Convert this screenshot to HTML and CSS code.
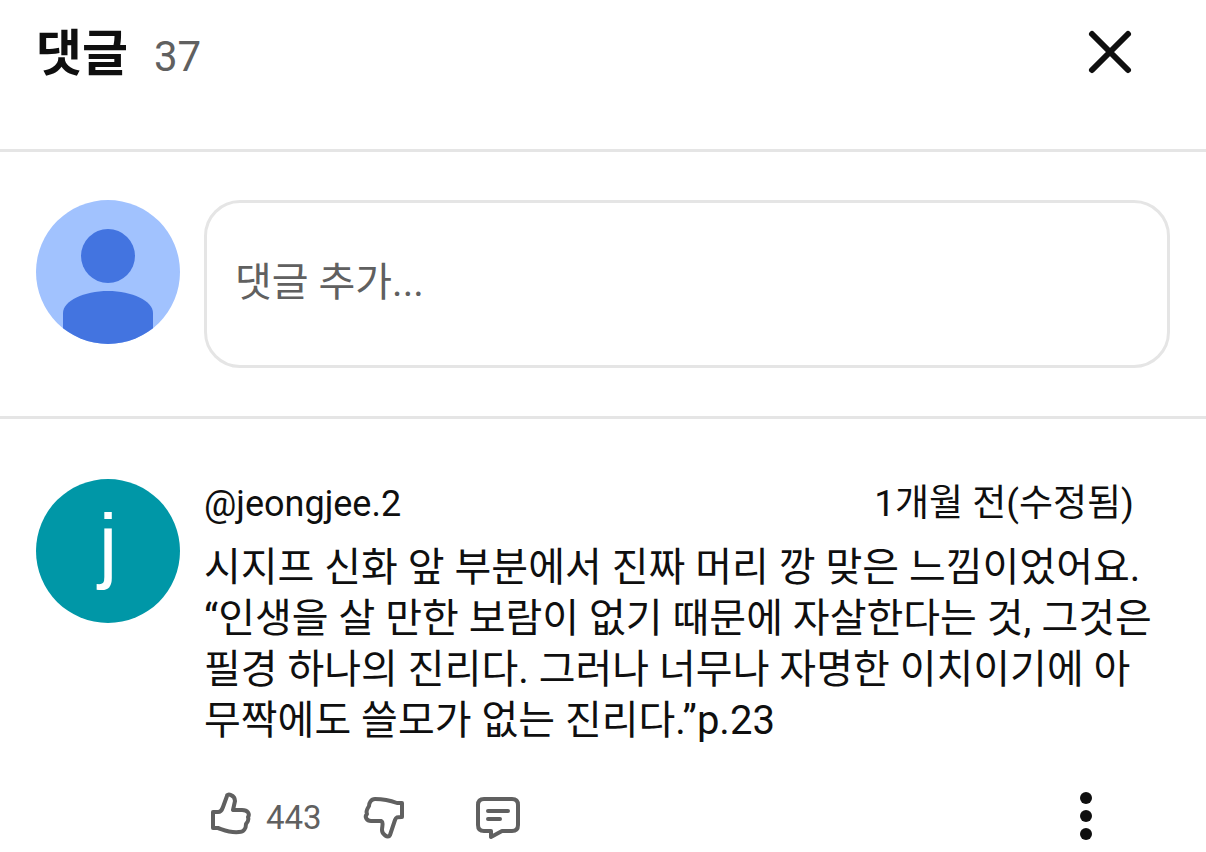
FILE: index.html
```
<!DOCTYPE html>
<html lang="ko">
<head>
    <meta charset="UTF-8">
    <meta name="viewport" content="width=device-width, initial-scale=1.0">
    <title>댓글</title>
    <link rel="stylesheet" href="styles.css">
</head>
<body>
    <header class="header">
        <h1>댓글</h1>
        <span class="count">37</span>
        <button class="close" type="button" aria-label="닫기">
            <svg width="48" height="48" viewBox="0 0 48 48"><path d="M6 6L42 42M42 6L6 42"/></svg>
        </button>
    </header>

    <form class="add-comment">
        <svg class="avatar" viewBox="0 0 144 144" aria-hidden="true">
            <rect width="144" height="144" fill="#a1c2fe"/>
            <circle cx="72" cy="56" r="27" fill="#4374e0"/>
            <path d="M27 144V113C27 101 48 91 72 91S117 101 117 113V144Z" fill="#4374e0"/>
        </svg>
        <input type="text" placeholder="댓글 추가..." aria-label="댓글 추가">
    </form>

    <article class="comment">
        <div class="avatar letter">j</div>
        <div class="content">
            <div class="meta">
                <a class="author" href="#">@jeongjee.2</a>
                <span class="time">1개월 전(수정됨)</span>
            </div>
            <p class="text">시지프 신화 앞 부분에서 진짜 머리 깡 맞은 느낌이었어요. “인생을 살 만한 보람이 없기 때문에 자살한다는 것, 그것은 필경 하나의 진리다. 그러나 너무나 자명한 이치이기에 아무짝에도 쓸모가 없는 진리다.”p.23</p>
            <div class="actions">
                <button class="like" type="button" aria-label="좋아요 443">
                    <svg width="44" height="48" viewBox="0 0 44 48"><path d="M5 20H10C13 20 14 18 15 15L19 4C19 1 27 3 27 9L25 18H34C40 18 42 22 40 25C41 28 40 30 38 32C38 36 36 40 31 40C22 41 16 38 10 36H5Z"/></svg>
                    <span>443</span>
                </button>
                <button class="dislike" type="button" aria-label="싫어요">
                    <svg width="44" height="48" viewBox="0 0 44 48"><path d="M40 11H35C27 8 22 7 13 7C9 7 7 11 7 14C5 17 4 20 5 22C2 25 5 29 9 29H19C22 30 20 34 20 38C20 42 26 47 28 43L33 28C34 25 35 25 40 25Z"/></svg>
                </button>
                <button class="reply" type="button" aria-label="답글">
                    <svg width="48" height="48" viewBox="0 0 48 48"><path d="M10 7H38Q44 7 44 13V33Q44 39 38 39H28L17 45V39H10Q4 39 4 33V13Q4 7 10 7ZM14 19H34M14 27H26"/></svg>
                </button>
                <button class="menu" type="button" aria-label="더보기">
                    <svg width="12" height="48" viewBox="0 0 12 48"><circle cx="6" cy="6" r="6"/><circle cx="6" cy="24" r="6"/><circle cx="6" cy="42" r="6"/></svg>
                </button>
            </div>
        </div>
    </article>
</body>
</html>
```
FILE: styles.css
```
* {
    box-sizing: border-box;
}
body {
    margin: 0;
    background-color: #fff;
    color: #0f0f0f;
    font-family: Roboto, "Noto Sans CJK KR", sans-serif;
}
h1, p {
    margin: 0;
}
button {
    padding: 0;
    border: none;
    background: none;
    color: inherit;
    font: inherit;
    cursor: pointer;
}
svg {
    display: block;
}
.header {
    display: flex;
    align-items: baseline;
    padding: 18px 72px 59px 36px;
    border-bottom: 3px solid #e5e5e5;
}
h1 {
    font-size: 50px;
    line-height: 72px;
    font-weight: 700;
}
.count {
    margin-left: 26px;
    font-size: 42px;
    color: #606060;
}
.close {
    align-self: flex-start;
    margin: 10px 0 0 auto;
}
.close path {
    fill: none;
    stroke: #0f0f0f;
    stroke-width: 6;
    stroke-linecap: round;
}
.add-comment {
    display: flex;
    gap: 24px;
    padding: 48px 36px;
    border-bottom: 3px solid #e5e5e5;
}
.avatar {
    flex: none;
    width: 144px;
    height: 144px;
    border-radius: 50%;
}
input {
    flex: 1;
    min-width: 0;
    height: 168px;
    padding: 0 28px 4px;
    border: 3px solid #e5e5e5;
    border-radius: 36px;
    color: #0f0f0f;
    font-family: inherit;
    font-size: 40px;
}
input::placeholder {
    color: #606060;
    opacity: 1;
}
.comment {
    display: flex;
    gap: 24px;
    padding: 60px 54px 8px 36px;
}
.letter {
    display: flex;
    align-items: center;
    justify-content: center;
    padding-bottom: 14px;
    background-color: #0097a7;
    color: #fff;
    font-family: "Liberation Sans", Arial, sans-serif;
    font-size: 84px;
    line-height: 96px;
}
.content {
    flex: 1;
    min-width: 0;
}
.meta {
    display: flex;
    justify-content: space-between;
    align-items: baseline;
    padding: 1px 18px 0 0;
    line-height: 48px;
    font-size: 36px;
}
.author {
    color: inherit;
    text-decoration: none;
}
.time {
    font-size: 37px;
}
.text {
    margin-top: 14px;
    font-size: 40px;
    line-height: 51px;
}
.actions {
    display: flex;
    align-items: center;
    margin-top: 44px;
    padding: 0 60px 0 4px;
    color: #606060;
}
.like {
    display: flex;
    align-items: center;
    gap: 14px;
    font-size: 33px;
    line-height: 48px;
}
.like span {
    padding-top: 4px;
}
.like path, .dislike path, .reply path {
    fill: none;
    stroke: #606060;
    stroke-width: 4;
    stroke-linejoin: round;
    stroke-linecap: round;
}
.dislike {
    margin-left: 40px;
}
.reply {
    margin-left: 68px;
}
.menu {
    margin-left: auto;
    color: #0f0f0f;
}
.menu svg {
    fill: currentColor;
}
```
